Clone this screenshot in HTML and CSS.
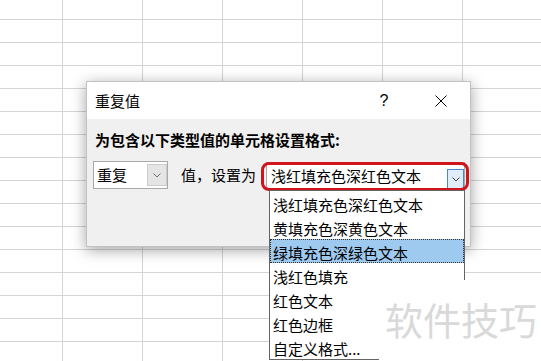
FILE: index.html
```html
<!DOCTYPE html>
<html lang="zh-CN">
<head>
<meta charset="utf-8">
<title>重复值</title>
<link rel="stylesheet" href="styles.css">
</head>
<body>
<div class="sheet">
  <div class="dialog">
    <div class="titlebar">
      <span class="title">重复值</span>
      <span class="help">?</span>
      <span class="close">
        <svg width="12" height="12" viewBox="0 0 12 12"><path d="M0.5 0.5L11.5 11.5M11.5 0.5L0.5 11.5" stroke="#000" stroke-width="1" fill="none"/></svg>
      </span>
    </div>
    <div class="body">
      <div class="label">为包含以下类型值的单元格设置格式:</div>
      <div class="row">
        <div class="combo small">
          <span class="value">重复</span>
          <span class="btn">
            <svg width="8" height="5" viewBox="0 0 8 5"><path d="M0.5 0.5L4 4L7.5 0.5" stroke="#707070" stroke-width="1" fill="none"/></svg>
          </span>
        </div>
        <span class="text">值，设置为</span>
        <div class="combo big">
          <span class="value">浅红填充色深红色文本</span>
          <span class="btn open">
            <svg width="8" height="5" viewBox="0 0 8 5"><path d="M0.5 0.5L4 4L7.5 0.5" stroke="#404040" stroke-width="1" fill="none"/></svg>
          </span>
          <div class="ring"></div>
          <ul class="list">
            <li>浅红填充色深红色文本</li>
            <li>黄填充色深黄色文本</li>
            <li class="selected">绿填充色深绿色文本</li>
            <li>浅红色填充</li>
            <li>红色文本</li>
            <li>红色边框</li>
            <li>自定义格式...</li>
          </ul>
        </div>
      </div>
    </div>
  </div>
  <div class="watermark">软件技巧</div>
</div>
</body>
</html>
```
FILE: styles.css
```css
* { box-sizing: border-box; }
html, body {
  margin: 0;
  padding: 0;
  width: 541px;
  height: 361px;
  overflow: hidden;
  background: #fff;
  font-family: "Noto Sans CJK SC", "Noto Sans", sans-serif;
}
.sheet {
  position: relative;
  width: 541px;
  height: 361px;
  background-color: #fff;
  background-image:
    linear-gradient(to right, #d4d4d4 1px, transparent 1px),
    linear-gradient(to bottom, #d4d4d4 1px, transparent 1px);
  background-size: 80px 23px;
  background-position: 62px 19px;
}
.dialog {
  position: absolute;
  left: 86px;
  top: 81px;
  width: 385px;
  height: 166px;
  background: #f0f0f0;
  border: 1px solid #c2c2c2;
  box-shadow: 0 3px 14px rgba(0, 0, 0, 0.36);
  display: flex;
  flex-direction: column;
}
.titlebar {
  height: 37px;
  background: #fff;
  display: flex;
  align-items: center;
  padding-left: 8px;
  flex-shrink: 0;
}
.title {
  font-size: 15px;
  color: #000;
  line-height: 20px;
  padding-top: 1px;
}
.help {
  margin-left: auto;
  width: 20px;
  text-align: center;
  font-family: "Liberation Sans", sans-serif;
  font-size: 16px;
  color: #000;
}
.close {
  width: 24px;
  height: 14px;
  margin-left: 35px;
  margin-right: 17px;
  display: flex;
  align-items: center;
  justify-content: center;
}
.body {
  padding: 11px 0 0 6px;
}
.label {
  font-size: 15px;
  font-weight: bold;
  line-height: 20px;
  padding-left: 2px;
  color: #000;
}
.row {
  display: flex;
  align-items: center;
  margin-top: 11px;
}
.combo {
  position: relative;
  height: 28px;
  background: #fff;
  border: 1px solid #a9a9a9;
  display: flex;
  align-items: stretch;
}
.combo .value {
  flex: 1;
  font-size: 15px;
  line-height: 26px;
  color: #000;
  white-space: nowrap;
}
.combo.small {
  width: 75px;
}
.combo.small .value {
  padding-left: 3px;
}
.combo.small .btn {
  width: 20px;
  margin: 2px 0 2px 0;
  background: #e5e5e5;
  border: 1px solid #cccccc;
  display: flex;
  align-items: center;
  justify-content: center;
}
.text {
  font-size: 15px;
  color: #000;
  margin-left: 13px;
  line-height: 20px;
}
.combo.big {
  width: 199px;
  margin-left: 10px;
  top: 1px;
}
.combo.big .value {
  padding-left: 4px;
}
.combo.big .btn {
  width: 17px;
  margin: 6px 0 0 0;
  background: #e0ecf8;
  border: 1px solid #4d88c4;
  display: flex;
  align-items: center;
  justify-content: center;
}
.ring {
  position: absolute;
  left: -6px;
  top: -1px;
  width: 208px;
  height: 29px;
  border: 3px solid #d0141c;
  border-radius: 8px;
}
.list {
  position: absolute;
  left: 2px;
  top: 27px;
  width: 196px;
  margin: 0;
  padding: 0;
  list-style: none;
  background: #fff;
  border: 1px solid #646464;
  z-index: 2;
}
.list li {
  height: 24px;
  line-height: 24px;
  padding: 2px 0 0 3px;
  font-size: 15px;
  color: #000;
  white-space: nowrap;
  overflow: visible;
}
.list li.selected {
  background: #9fcaf0;
  outline: 1px dotted #303030;
  outline-offset: -1px;
}
.watermark {
  position: absolute;
  left: 379px;
  top: 280px;
  width: 162px;
  height: 81px;
  background: #fff;
  padding: 19px 0 0 6px;
  font-size: 38px;
  line-height: 40px;
  color: #d9d9d9;
  z-index: 5;
  white-space: nowrap;
}
```
